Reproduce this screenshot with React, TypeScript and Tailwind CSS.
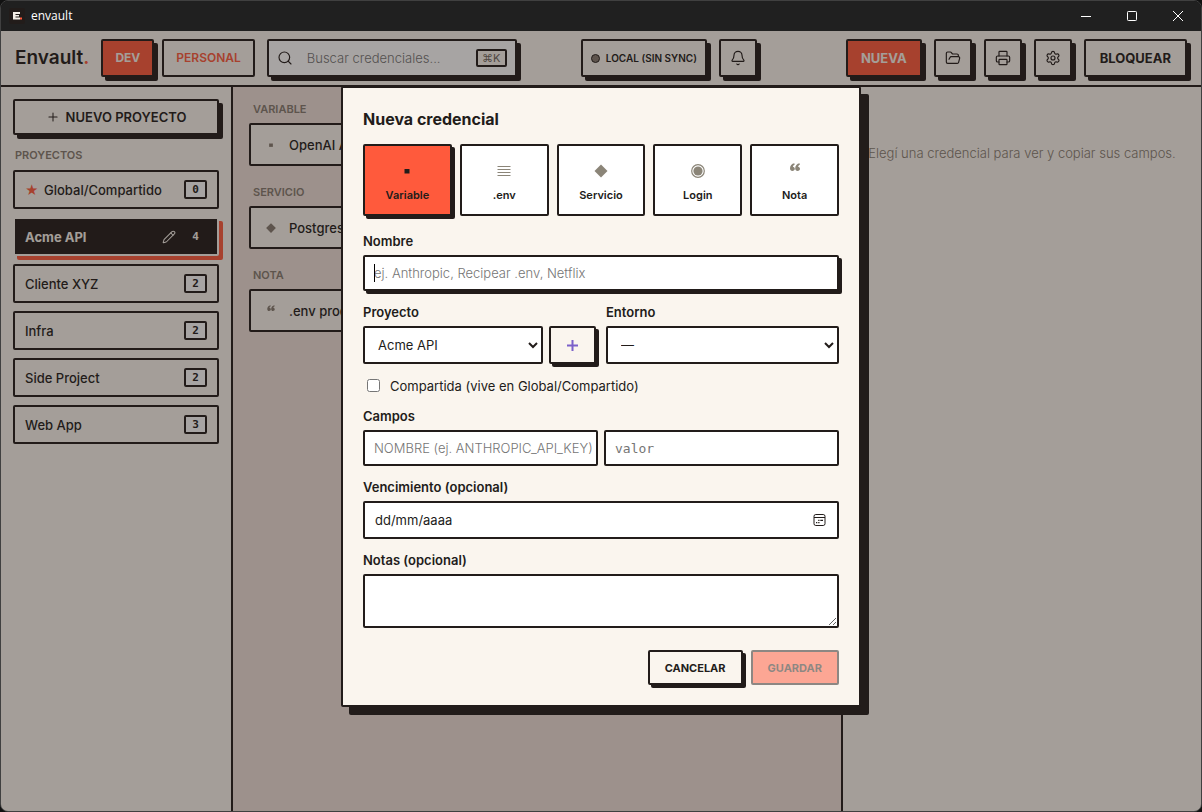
import { useState } from 'react'
import { Bell, FolderOpen, Pencil, Plus, Printer, Search, Settings } from 'lucide-react'
import clsx from 'clsx'

type Kind = 'variable' | 'env' | 'service' | 'login' | 'note'

const KINDS: { id: Kind; label: string }[] = [
  { id: 'variable', label: 'Variable' },
  { id: 'env', label: '.env' },
  { id: 'service', label: 'Servicio' },
  { id: 'login', label: 'Login' },
  { id: 'note', label: 'Nota' },
]

const PROJECTS = [
  { name: 'Acme API', count: 4 },
  { name: 'Cliente XYZ', count: 2 },
  { name: 'Infra', count: 2 },
  { name: 'Side Project', count: 2 },
  { name: 'Web App', count: 3 },
]

const GROUPS: { title: string; kind: Kind; name: string }[] = [
  { title: 'VARIABLE', kind: 'variable', name: 'OpenAI API' },
  { title: 'SERVICIO', kind: 'service', name: 'Postgres' },
  { title: 'NOTA', kind: 'note', name: '.env prod' },
]

function KindIcon({ kind, size }: { kind: Kind; size: number }) {
  return (
    <svg width={size} height={size} viewBox="0 0 16 16" fill="currentColor" aria-hidden="true">
      {kind === 'variable' && <rect x="5.5" y="6" width="5" height="4.5" />}
      {kind === 'env' && (
        <path d="M1.5 3h13v1h-13zM1.5 6h13v1h-13zM1.5 9h13v1h-13zM1.5 12h13v1h-13z" />
      )}
      {kind === 'service' && <path d="M8 1.5 14.5 8 8 14.5 1.5 8z" />}
      {kind === 'login' && (
        <>
          <circle cx="8" cy="8" r="6.3" fill="none" stroke="currentColor" strokeWidth="1.2" />
          <circle cx="8" cy="8" r="4.6" />
        </>
      )}
      {kind === 'note' && (
        <path d="M7.300.300C4.800.700 3 2.800 3 5.300 3 7 4 8 5.400 8s2.400-.9 2.400-2.200c0-1.200-.8-2-1.900-2.100.2-1 .8-1.700 1.800-2zM12.500.300C10 .700 8.200 2.800 8.200 5.300 8.200 7 9.200 8 10.600 8s2.400-.9 2.400-2.200c0-1.200-.8-2-1.900-2.100.2-1 .8-1.700 1.800-2z" />
      )}
    </svg>
  )
}

function TitleBar() {
  return (
    <div className="flex h-[30px] shrink-0 items-center justify-between bg-[#202020] pb-px text-white">
      <div className="flex items-center gap-[6px] pl-2">
        <span className="flex size-4 items-center justify-center rounded-xs bg-[#221c1a]">
          <svg width="16" height="16" viewBox="0 0 16 16" aria-hidden="true">
            <path d="M4 4h7v2H6.500v1H10v1.500H6.500v1H11v2H4z" fill="#f4efe8" />
            <rect x="11" y="9.500" width="2" height="2" fill="#ff5a3c" />
          </svg>
        </span>
        <span className="font-['Open_Sans',sans-serif] text-xs">envault</span>
      </div>
      <div className="flex h-full">
        <button type="button" aria-label="Minimizar" className="flex w-[46px] items-center justify-center">
          <svg width="10" height="10" viewBox="0 0 10 10" stroke="currentColor">
            <path d="M0 5.500h10" />
          </svg>
        </button>
        <button type="button" aria-label="Maximizar" className="flex w-[46px] items-center justify-center">
          <svg width="10" height="10" viewBox="0 0 10 10" fill="none" stroke="currentColor">
            <rect x=".5" y=".5" width="9" height="9" rx=".8" />
          </svg>
        </button>
        <button type="button" aria-label="Cerrar" className="flex w-[46px] items-center justify-center">
          <svg width="10" height="10" viewBox="0 0 10 10" stroke="currentColor">
            <path d="m0 0 10 10M10 0 0 10" />
          </svg>
        </button>
      </div>
    </div>
  )
}

function IconButton({ label, children }: { label: string; children: React.ReactNode }) {
  return (
    <button
      type="button"
      aria-label={label}
      className="flex size-[38px] shrink-0 items-center justify-center rounded-xs border-2 border-[#221c1a] bg-[#faf5ee] shadow-[4px_4px_0_#221c1a]"
    >
      {children}
    </button>
  )
}

function Header() {
  return (
    <header className="flex h-14 shrink-0 items-center gap-3 border-b-2 border-[#221c1a] bg-[#faf5ee] px-[14px]">
      <div className="flex items-center gap-2 font-bold">
        <span className="mr-1 text-[19px] font-semibold">
          Envault<span className="text-[#ff5a3c]">.</span>
        </span>
        <button
          type="button"
          className="h-[38px] rounded-xs border-2 border-[#221c1a] bg-[#ff5a3c] px-3 text-[12px] text-[#faf5ee] shadow-[4px_4px_0_#221c1a]"
        >
          DEV
        </button>
        <button type="button" className="h-[38px] rounded-xs border-2 border-[#221c1a] px-3 text-[12px] font-semibold text-[#ff5a3c]">
          PERSONAL
        </button>
      </div>
      <label className="flex h-[38px] w-[250px] items-center rounded-xs border-2 border-[#221c1a] bg-white px-2 shadow-[4px_4px_0_#221c1a]">
        <Search size={16} strokeWidth={1.75} className="shrink-0" />
        <input
          aria-label="Buscar credenciales"
          placeholder="Buscar credenciales..."
          className="ml-[14px] min-w-0 flex-1 text-[13px] font-light outline-none placeholder:text-[#757575]"
        />
        <kbd className="flex h-[18px] w-[31px] items-center justify-center rounded-xs border-2 border-[#221c1a] bg-[#faf5ee] font-[Inter,'DejaVu_Sans',sans-serif] text-[11px] text-[#6e665e]">
          ⌘K
        </kbd>
      </label>
      <div className="ml-[52px] flex items-center gap-3">
        <button
          type="button"
          className="flex h-[38px] items-center gap-[6px] rounded-xs border-2 border-[#221c1a] bg-[#faf5ee] px-2 text-[10px] font-semibold whitespace-nowrap shadow-[4px_4px_0_#221c1a]"
        >
          <span className="size-[9px] rounded-full border border-[#221c1a] bg-[#857b70]" />
          LOCAL (SIN SYNC)
        </button>
        <IconButton label="Notificaciones">
          <Bell size={16} strokeWidth={1.75} />
        </IconButton>
      </div>
      <div className="ml-auto flex items-center gap-3">
        <button
          type="button"
          className="h-[38px] rounded-xs border-2 border-[#221c1a] bg-[#ff5a3c] px-[13px] text-[13px] font-bold text-[#faf5ee] shadow-[4px_4px_0_#221c1a]"
        >
          NUEVA
        </button>
        <IconButton label="Abrir carpeta">
          <FolderOpen size={16} strokeWidth={1.75} />
        </IconButton>
        <IconButton label="Imprimir">
          <Printer size={16} strokeWidth={1.75} />
        </IconButton>
        <IconButton label="Ajustes">
          <Settings size={16} strokeWidth={1.75} />
        </IconButton>
        <button
          type="button"
          className="h-[38px] rounded-xs border-2 border-[#221c1a] bg-[#faf5ee] px-[14px] text-[13px] font-bold shadow-[4px_4px_0_#221c1a]"
        >
          BLOQUEAR
        </button>
      </div>
    </header>
  )
}

function Count({ value }: { value: number }) {
  return (
    <span className="flex h-[19px] w-[23px] items-center justify-center rounded-xs border-2 border-[#221c1a] bg-white font-['DejaVu_Sans_Mono',monospace] text-[11px] font-bold">
      {value}
    </span>
  )
}

function Sidebar() {
  return (
    <aside className="w-[232px] shrink-0 border-r-2 border-[#221c1a] bg-[#faf5ee] p-3">
      <button
        type="button"
        className="flex h-9 w-full items-center justify-center gap-[6px] rounded-xs border-2 border-[#221c1a] bg-[#faf5ee] text-[13px] font-semibold shadow-[4px_4px_0_#221c1a]"
      >
        <Plus size={14} strokeWidth={1.75} />
        NUEVO PROYECTO
      </button>
      <h2 className="mt-3 mb-[7px] pl-[2px] text-[11px] leading-4 font-semibold text-[#857b70]">PROYECTOS</h2>
      <ul className="flex flex-col gap-2 text-[13px] font-medium">
        <li className="flex h-[39px] items-center rounded-xs border-2 border-[#221c1a] px-[10px]">
          <span className="w-[19px] text-[#ff5a3c]">★</span>
          <span className="flex-1">Global/Compartido</span>
          <Count value={0} />
        </li>
        {PROJECTS.map((p, i) =>
          i === 0 ? (
            <li
              key={p.name}
              className="flex h-[39px] items-center rounded-xs border-2 border-[#faf5ee] bg-[#221c1a] px-[10px] font-bold text-[#faf5ee] shadow-[4px_4px_0_#ff5a3c]"
            >
              <span className="flex-1">{p.name}</span>
              <button type="button" aria-label="Editar proyecto">
                <Pencil size={14} strokeWidth={1.75} />
              </button>
              <span className="ml-2 w-[23px] text-center font-['DejaVu_Sans_Mono',monospace] text-[11px]">{p.count}</span>
            </li>
          ) : (
            <li key={p.name} className="flex h-[39px] items-center justify-between rounded-xs border-2 border-[#221c1a] px-[10px]">
              {p.name}
              <Count value={p.count} />
            </li>
          ),
        )}
      </ul>
    </aside>
  )
}

function CredentialList() {
  return (
    <main className="min-w-0 flex-1 bg-[#eee0d9] px-4 pt-[14px]">
      {GROUPS.map((g) => (
        <section key={g.title} className="mb-[18px]">
          <h3 className="mb-[6px] pl-1 text-[11px] leading-4 font-semibold text-[#857b70]">{g.title}</h3>
          <div className="flex h-[43px] items-center gap-3 rounded-xs border-2 border-[#221c1a] bg-[#faf5ee] px-[14px] text-[13px] font-medium">
            <span className="text-[#857b70]">
              <KindIcon kind={g.kind} size={12} />
            </span>
            {g.name}
          </div>
        </section>
      ))}
    </main>
  )
}

const labelClass = 'mb-[5px] block text-[13px] leading-[18px] font-semibold'
const fieldClass =
  'block w-full min-w-0 rounded-xs border-2 border-[#221c1a] bg-white pl-[9px] text-[13px] outline-none placeholder:text-[#757575]'

function NewCredentialDialog() {
  const [kind, setKind] = useState<Kind>('variable')

  return (
    <form
      role="dialog"
      aria-labelledby="dialog-title"
      onSubmit={(e) => e.preventDefault()}
      className="flex w-[520px] max-w-full flex-col gap-3 rounded-xs border-2 border-[#221c1a] bg-[#faf5ee] p-5 shadow-[8px_8px_0_#221c1a]"
    >
      <h1 id="dialog-title" className="mb-[2px] text-base leading-[22px] font-bold">
        Nueva credencial
      </h1>

      <div className="mb-1 grid grid-cols-5 gap-2">
        {KINDS.map((k) => (
          <button
            key={k.id}
            type="button"
            aria-pressed={kind === k.id}
            onClick={() => setKind(k.id)}
            className={clsx(
              'flex h-[72px] flex-col items-center justify-center gap-2 rounded-xs border-2 border-[#221c1a] pt-[6px] text-[11px] leading-4 font-semibold',
              kind === k.id ? 'bg-[#ff5a3c] shadow-[3px_3px_0_#221c1a]' : 'bg-white',
            )}
          >
            <span className={kind === k.id ? 'text-[#221c1a]' : 'text-[#8b8578]'}>
              <KindIcon kind={k.id} size={16} />
            </span>
            {k.label}
          </button>
        ))}
      </div>

      <div>
        <label htmlFor="name" className={labelClass}>
          Nombre
        </label>
        <div className="relative">
          <input
            id="name"
            placeholder="ej. Anthropic, Recipear .env, Netflix"
            className={clsx(fieldClass, 'h-9 font-light caret-transparent shadow-[3px_3px_0_#221c1a]')}
          />
          <span className="absolute top-[9px] left-[11px] h-[18px] w-px bg-black" aria-hidden="true" />
        </div>
      </div>

      <div className="grid grid-cols-2 gap-[10px]">
        <div>
          <label htmlFor="project" className={labelClass}>
            Proyecto
          </label>
          <div className="flex gap-[6px]">
            <select id="project" className={clsx(fieldClass, 'h-[38px] flex-1')}>
              {PROJECTS.map((p) => (
                <option key={p.name}>{p.name}</option>
              ))}
            </select>
            <button
              type="button"
              aria-label="Nuevo proyecto"
              className="flex h-[38px] w-[47px] shrink-0 items-center justify-center rounded-xs border-2 border-[#221c1a] bg-[#faf5ee] text-[#7b61c9] shadow-[3px_3px_0_#221c1a]"
            >
              <svg width="11" height="11" viewBox="0 0 11 11" stroke="currentColor" strokeWidth="2">
                <path d="M5.500 0v11M0 5.500h11" />
              </svg>
            </button>
          </div>
        </div>
        <div>
          <label htmlFor="environment" className={labelClass}>
            Entorno
          </label>
          <select id="environment" className={clsx(fieldClass, 'h-[38px]')}>
            <option>—</option>
          </select>
        </div>
      </div>

      <label className="flex h-[19px] items-center gap-[10px] pl-1 text-[13px]">
        <input type="checkbox" className="size-[13px]" />
        Compartida (vive en Global/Compartido)
      </label>

      <fieldset>
        <legend className={labelClass}>Campos</legend>
        <div className="grid grid-cols-2 gap-[6px]">
          <input
            aria-label="Nombre del campo"
            placeholder="NOMBRE (ej. ANTHROPIC_API_KEY)"
            className={clsx(fieldClass, 'h-9 font-light')}
          />
          <input
            aria-label="Valor del campo"
            placeholder="valor"
            className={clsx(fieldClass, "h-9 font-['DejaVu_Sans_Mono',monospace]")}
          />
        </div>
      </fieldset>

      <div>
        <label htmlFor="expiry" className={labelClass}>
          Vencimiento (opcional)
        </label>
        <div className="flex h-[38px] items-center rounded-xs border-2 border-[#221c1a] bg-white pr-[11px] pl-[10px]">
          <input
            id="expiry"
            placeholder="dd/mm/aaaa"
            className="min-w-0 flex-1 text-[13px] outline-none placeholder:text-[#221c1a]"
          />
          <button type="button" aria-label="Abrir calendario">
            <svg width="13" height="13" viewBox="0 0 13 13" fill="none" stroke="currentColor">
              <rect x="1" y=".5" width="11" height="11" rx="1.8" />
              <path d="M1 3.500h11" />
              <path d="M5.200 6.300h1.300M7.300 6.300H10M3 8.700h1.300M5.200 8.700h1.300" strokeWidth="1.300" />
            </svg>
          </button>
        </div>
      </div>

      <div>
        <label htmlFor="notes" className={labelClass}>
          Notas (opcional)
        </label>
        <textarea id="notes" className={clsx(fieldClass, 'h-[54px] resize-y')} />
      </div>

      <div className="mt-[10px] flex justify-end gap-2 text-[11px] font-bold">
        <button
          type="button"
          className="h-[35px] rounded-xs border-2 border-[#221c1a] bg-[#faf5ee] px-[15px] shadow-[3px_3px_0_#221c1a]"
        >
          CANCELAR
        </button>
        <button type="submit" disabled className="h-[35px] rounded-xs border-2 border-[#221c1a] bg-[#ff5a3c] px-[15px] opacity-50">
          GUARDAR
        </button>
      </div>
    </form>
  )
}

export default function App() {
  return (
    <div className="h-screen bg-[#111]">
      <div className="flex h-full flex-col overflow-hidden rounded-lg border border-[#404040] font-[Inter,sans-serif] leading-5 text-[#221c1a]">
        <TitleBar />
        <div className="relative flex min-h-0 flex-1 flex-col">
          <Header />
          <div className="flex min-h-0 flex-1">
            <Sidebar />
            <CredentialList />
            <aside className="w-[360px] shrink-0 border-l-2 border-[#221c1a] bg-[#faf5ee] pt-14 text-center text-[13px] font-light text-[#857b70]">
              Elegí una credencial para ver y copiar sus campos.
            </aside>
          </div>
          <div className="absolute inset-0 flex items-start justify-center bg-[#221c1a]/40 pt-[55px]">
            <NewCredentialDialog />
          </div>
        </div>
      </div>
    </div>
  )
}
